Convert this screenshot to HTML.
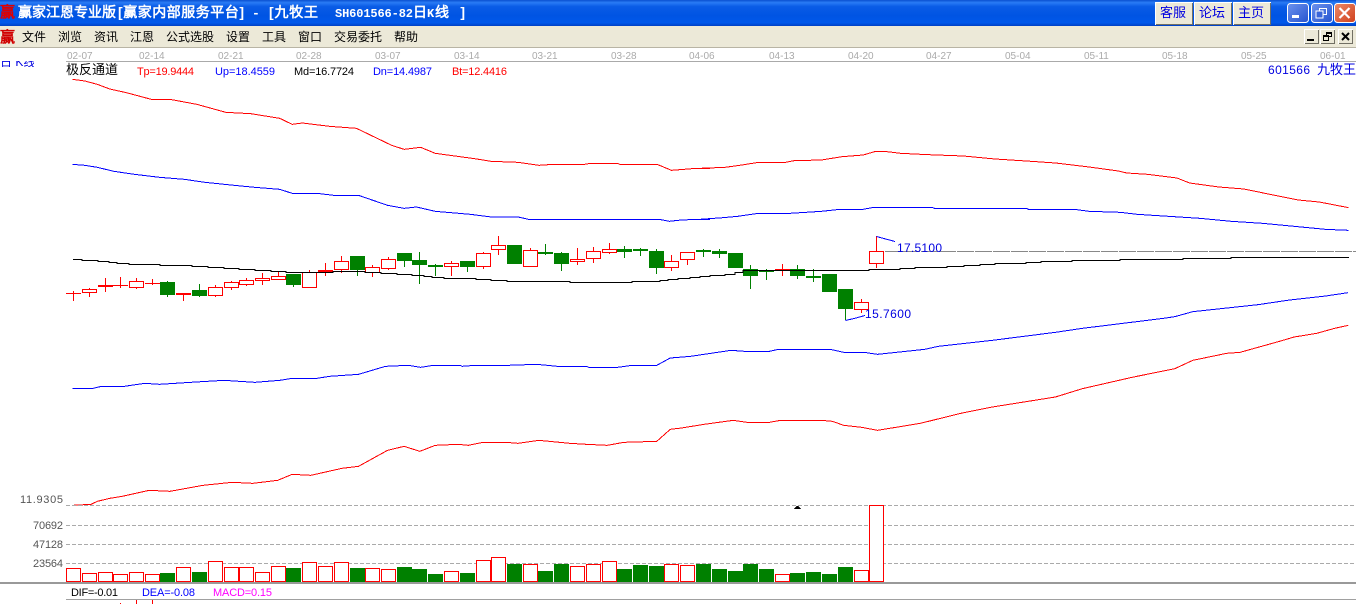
<!DOCTYPE html>
<html><head><meta charset="utf-8"><title>赢家江恩专业版</title>
<style>
html,body{margin:0;padding:0;background:#fff;width:1356px;height:604px;overflow:hidden}
svg{display:block;position:absolute;left:0;top:0}
text{font-family:"Liberation Sans","WenQuanYi Zen Hei",sans-serif;white-space:pre}
.m{font-size:12px;fill:#000}
.d{font-size:10px;fill:#aaa}
.i{font-size:11px}
.ax{font-size:11px;fill:#555}
.l{fill:none;stroke-width:1;vector-effect:non-scaling-stroke}
</style></head><body>
<svg width="1356" height="604" viewBox="0 0 1356 604" xmlns="http://www.w3.org/2000/svg">
<defs>
<linearGradient id="tb" x1="0" y1="0" x2="0" y2="1">
<stop offset="0" stop-color="#0a4fd0"/><stop offset=".1" stop-color="#2a7cf5"/><stop offset=".25" stop-color="#0a5ce6"/><stop offset=".6" stop-color="#0054e3"/><stop offset=".88" stop-color="#0058ea"/><stop offset="1" stop-color="#0040c4"/>
</linearGradient>
<linearGradient id="bb" x1="0" y1="0" x2="1" y2="1"><stop offset="0" stop-color="#6d93ee"/><stop offset="1" stop-color="#2553cf"/></linearGradient>
<linearGradient id="br" x1="0" y1="0" x2="1" y2="1"><stop offset="0" stop-color="#ec8a68"/><stop offset="1" stop-color="#d0401c"/></linearGradient>
<clipPath id="cl1"><rect x="0" y="61" width="34" height="6"/></clipPath>
<clipPath id="cl2"><rect x="0" y="600" width="70" height="4"/></clipPath>
</defs>

<!-- title bar -->
<rect x="0" y="0" width="1356" height="26" fill="url(#tb)"/>
<text x="0" y="17" style="font-size:15px;font-weight:bold;fill:#e00000">赢</text>
<text x="18" y="17" textLength="98" style="font-size:14px;font-weight:bold;fill:#fff">赢家江恩专业版</text>
<text x="118" y="17" textLength="126" style="font-size:14px;font-weight:bold;fill:#fff">[赢家内部服务平台]</text>
<text x="252" y="17" style="font-size:13px;font-weight:bold;fill:#fff;font-family:'Liberation Mono',monospace">-</text>
<text x="269" y="17" textLength="49" style="font-size:14px;font-weight:bold;fill:#fff">[九牧王</text>
<text x="335" y="17" textLength="78" style="font-size:12px;font-weight:bold;fill:#fff;font-family:'Liberation Mono',monospace">SH601566-82</text>
<text x="413" y="17" style="font-size:14px;font-weight:bold;fill:#fff">日</text>
<text x="427" y="17" style="font-size:12px;font-weight:bold;fill:#fff;font-family:'Liberation Mono',monospace">K</text>
<text x="435" y="17" textLength="30" style="font-size:14px;font-weight:bold;fill:#fff">线]</text>

<!-- title buttons -->
<g shape-rendering="crispEdges">
<rect x="1155" y="2" width="38" height="23" fill="#fff"/><rect x="1156" y="3" width="37" height="22" fill="#716f64"/><rect x="1156" y="3" width="36" height="21" fill="#ece9d8"/>
<rect x="1194" y="2" width="38" height="23" fill="#fff"/><rect x="1195" y="3" width="37" height="22" fill="#716f64"/><rect x="1195" y="3" width="36" height="21" fill="#ece9d8"/>
<rect x="1233" y="2" width="38" height="23" fill="#fff"/><rect x="1234" y="3" width="37" height="22" fill="#716f64"/><rect x="1234" y="3" width="36" height="21" fill="#ece9d8"/>
</g>
<text x="1160" y="17" style="font-size:13px;fill:#0000e0">客服</text>
<text x="1199" y="17" style="font-size:13px;fill:#0000e0">论坛</text>
<text x="1238" y="17" style="font-size:13px;fill:#0000e0">主页</text>
<rect x="1287.5" y="3.5" width="21" height="19" rx="3" fill="url(#bb)" stroke="#fff"/>
<rect x="1311.5" y="3.5" width="21" height="19" rx="3" fill="url(#bb)" stroke="#fff"/>
<rect x="1334.5" y="3.5" width="21" height="19" rx="3" fill="url(#br)" stroke="#fff"/>
<g shape-rendering="crispEdges">
<rect x="1292" y="15" width="7" height="3" fill="#fff"/>
<rect x="1319.5" y="8.5" width="7" height="6" fill="none" stroke="#fff"/>
<rect x="1316" y="11" width="7" height="7" fill="#3a66da" stroke="#fff"/>
</g>
<path d="M1339.5 8 L1349.5 18 M1349.5 8 L1339.5 18" stroke="#fff" stroke-width="2.2" fill="none"/>

<!-- menu bar -->
<rect x="0" y="26" width="1356" height="21" fill="#ece9d8"/>
<rect x="0" y="47" width="1356" height="1" fill="#b8b4a4"/>
<text x="0" y="42" style="font-size:15px;font-weight:bold;fill:#d00000">赢</text>
<text class="m" x="22" y="41">文件</text>
<text class="m" x="58" y="41">浏览</text>
<text class="m" x="94" y="41">资讯</text>
<text class="m" x="130" y="41">江恩</text>
<text class="m" x="166" y="41">公式选股</text>
<text class="m" x="226" y="41">设置</text>
<text class="m" x="262" y="41">工具</text>
<text class="m" x="298" y="41">窗口</text>
<text class="m" x="334" y="41">交易委托</text>
<text class="m" x="394" y="41">帮助</text>
<g shape-rendering="crispEdges">
<rect x="1304" y="29" width="15" height="15" fill="#fff"/><rect x="1305" y="30" width="14" height="14" fill="#716f64"/><rect x="1305" y="30" width="13" height="13" fill="#ece9d8"/>
<rect x="1320" y="29" width="15" height="15" fill="#fff"/><rect x="1321" y="30" width="14" height="14" fill="#716f64"/><rect x="1321" y="30" width="13" height="13" fill="#ece9d8"/>
<rect x="1338" y="29" width="15" height="15" fill="#fff"/><rect x="1339" y="30" width="14" height="14" fill="#716f64"/><rect x="1339" y="30" width="13" height="13" fill="#ece9d8"/>
<rect x="1307" y="39" width="7" height="2" fill="#000"/>
<rect x="1326.5" y="32.5" width="5" height="4" fill="none" stroke="#000"/><rect x="1323.5" y="35.5" width="5" height="5" fill="#ece9d8" stroke="#000"/><rect x="1326" y="32" width="6" height="2" fill="#000"/><rect x="1323" y="35" width="6" height="2" fill="#000"/>
</g>
<path d="M1342 33 L1349 40 M1349 33 L1342 40" stroke="#000" stroke-width="2" fill="none"/>

<!-- date axis -->
<g class="dates">
<text class="d" x="67" y="59">02-07</text><text class="d" x="139" y="59">02-14</text><text class="d" x="218" y="59">02-21</text><text class="d" x="296" y="59">02-28</text><text class="d" x="375" y="59">03-07</text><text class="d" x="454" y="59">03-14</text><text class="d" x="532" y="59">03-21</text><text class="d" x="611" y="59">03-28</text><text class="d" x="689" y="59">04-06</text><text class="d" x="769" y="59">04-13</text><text class="d" x="848" y="59">04-20</text><text class="d" x="926" y="59">04-27</text><text class="d" x="1005" y="59">05-04</text><text class="d" x="1084" y="59">05-11</text><text class="d" x="1162" y="59">05-18</text><text class="d" x="1241" y="59">05-25</text><text class="d" x="1320" y="59">06-01</text>
</g>
<rect x="66" y="61" width="1290" height="1" fill="#aaa" shape-rendering="crispEdges"/>
<g clip-path="url(#cl1)"><text x="0" y="66" style="font-size:12px;fill:#0000e0">日 K线</text></g>

<!-- indicator header -->
<text x="66" y="74" style="font-size:13px;fill:#000">极反通道</text>
<text class="i" x="137" y="75" textLength="57" style="fill:#f00">Tp=19.9444</text>
<text class="i" x="215" y="75" textLength="60" style="fill:#00f">Up=18.4559</text>
<text class="i" x="294" y="75" textLength="60" style="fill:#000">Md=16.7724</text>
<text class="i" x="373" y="75" textLength="59" style="fill:#00f">Dn=14.4987</text>
<text class="i" x="452" y="75" textLength="55" style="fill:#f00">Bt=12.4416</text>
<text x="1268" y="74" textLength="42" style="font-size:12px;fill:#0000e0">601566</text>
<text x="1317" y="74" style="font-size:13px;fill:#0000e0">九牧王</text>

<!-- channel lines -->
<g shape-rendering="crispEdges">
<g transform="translate(60,70) scale(.4146,.33333)">
<polyline class="l" stroke="#f00" points="30,28 60,33 90,43 120,57 160,68 220,88 265,88 330,103 400,127 460,131 530,145 560,163 585,159 650,169 715,175 800,226 830,238 870,232 905,250 1000,266 1040,274 1105,277 1155,286 1190,283 1265,283 1280,280 1345,280 1350,283 1440,283 1475,301 1505,298 1535,295 1568,295"/>
<polyline class="l" stroke="#00f" points="30,283 60,286 90,292 130,304 180,313 240,322 300,328 350,337 420,346 470,352 530,358 560,370 620,370 660,376 720,376 790,406 830,415 860,411 905,424 990,433 1040,441 1105,441 1130,448 1445,448 1470,454 1490,451 1530,448 1568,448"/>
</g>
<g transform="translate(700,140) scale(.41841,.33333)">
<polyline class="l" stroke="#f00" points="0,85 60,82 100,75 135,68 205,67 225,62 290,60 340,50 390,45 420,34 440,34 480,40 545,44 630,48 705,57 780,63 850,69 930,81 1000,93 1020,99 1070,103 1140,114 1170,129 1240,141 1300,147 1370,165 1430,180 1480,186 1550,203"/>
<polyline class="l" stroke="#00f" points="0,238 55,233 90,229 140,220 215,220 290,214 335,208 390,208 415,202 555,202 560,205 780,205 785,208 895,208 930,214 1005,217 1045,223 1120,229 1195,235 1270,244 1345,250 1420,259 1495,268 1550,271"/>
</g>
<g transform="translate(60,350) scale(.4146,.33333)">
<polyline class="l" stroke="#00f" points="30,115 80,115 100,109 155,109 205,100 240,103 315,97 395,91 470,97 530,91 560,85 620,85 650,79 720,73 785,49 840,46 870,52 900,46 965,46 970,49 1000,46 1080,46 1150,43 1200,49 1270,49 1275,52 1345,52 1380,46 1440,46"/>
<polyline class="l" stroke="#f00" points="30,466 75,463 90,454 120,445 150,439 215,421 265,424 345,406 415,397 465,400 525,391 560,373 605,376 680,355 720,349 790,301 830,289 868,304 905,286 960,283 985,286 1020,277 1075,277 1105,280 1155,271 1230,280 1270,283 1320,286 1360,277 1440,274"/>
</g>
<g transform="translate(650,280) scale(.45045,.33333)">
<polyline class="l" stroke="#00f" points="0,256 15,256 45,234 90,229 180,211 210,214 265,214 285,208 400,208 430,217 475,217 505,223 610,208 640,199 760,181 900,157 960,145 1140,115 1165,110 1205,95 1350,74 1420,60 1500,48 1550,38"/>
<polyline class="l" stroke="#f00" points="0,484 15,484 45,448 70,444 120,433 185,421 215,427 265,427 290,421 380,421 405,424 430,436 470,442 505,451 600,430 690,400 760,381 900,351 960,326 1070,292 1165,266 1205,241 1280,220 1310,217 1400,183 1430,171 1480,160 1520,145 1550,136"/>
</g>

<!-- dashed price line -->
<line x1="885" y1="251.5" x2="1356" y2="251.5" stroke="#888" stroke-dasharray="17 1"/>

<!-- wicks -->
<path fill="none" stroke="#f00" d="M73.5 291V301M89.5 288V297M105.5 278V292M120.5 277V288M136.5 278V289M152.5 279V285M183.5 293V301M215.5 285V297M231.5 281V290M246.5 278V286M262.5 273V285M278.5 272V279M309.5 270V272M325.5 263V276M341.5 256V273M372.5 265V277M388.5 257V270M451.5 261V276M483.5 252V269M498.5 236V255M530.5 248V266M577.5 248V265M593.5 247V263M609.5 243V254M671.5 255V271M687.5 252V265M782.5 264V276M861.5 299V313M876.5 236V268"/>
<path fill="none" stroke="#008000" d="M167.5 281V297M199.5 284V297M293.5 274V287M357.5 256V276M404.5 253V267M419.5 252V284M435.5 264V276M467.5 261V272M545.5 244V255M561.5 252V271M624.5 246V258M640.5 248V256M656.5 249V274M703.5 249V257M719.5 249V258M750.5 265V289M766.5 269V280M797.5 265V279M813.5 269V282M845.5 289V320"/>

<!-- filled red -->
<g fill="#f00">
<rect x="66" y="293" width="15" height="1"/><rect x="98" y="285" width="15" height="2"/><rect x="113" y="285" width="15" height="1"/><rect x="145" y="283" width="15" height="1"/><rect x="176" y="293" width="15" height="2"/><rect x="318" y="270" width="15" height="2"/><rect x="775" y="269" width="15" height="2"/>
</g>
<!-- hollow red -->
<g fill="#fff" stroke="#f00">
<rect x="82.5" y="289.5" width="14" height="3"/><rect x="129.5" y="281.5" width="14" height="6"/><rect x="208.5" y="287.5" width="14" height="8"/><rect x="224.5" y="282.5" width="14" height="5"/><rect x="239.5" y="280.5" width="14" height="4"/><rect x="255.5" y="278.5" width="14" height="2"/><rect x="271.5" y="276.5" width="14" height="3"/><rect x="302.5" y="272.5" width="14" height="15"/><rect x="334.5" y="261.5" width="14" height="8"/><rect x="365.5" y="267.5" width="14" height="5"/><rect x="381.5" y="259.5" width="14" height="9"/><rect x="444.5" y="263.5" width="14" height="3"/><rect x="476.5" y="253.5" width="14" height="13"/><rect x="491.5" y="245.5" width="14" height="4"/><rect x="523.5" y="250.5" width="14" height="16"/><rect x="570.5" y="259.5" width="14" height="2"/><rect x="586.5" y="251.5" width="14" height="7"/><rect x="602.5" y="249.5" width="14" height="3"/><rect x="664.5" y="261.5" width="14" height="6"/><rect x="680.5" y="252.5" width="14" height="7"/><rect x="854.5" y="302.5" width="14" height="7"/><rect x="869.5" y="251.5" width="14" height="12"/>
</g>
<!-- filled green -->
<g fill="#008000">
<rect x="160" y="282" width="15" height="13"/><rect x="192" y="290" width="15" height="6"/><rect x="286" y="274" width="15" height="11"/><rect x="350" y="256" width="15" height="14"/><rect x="397" y="253" width="15" height="8"/><rect x="412" y="260" width="15" height="5"/><rect x="428" y="265" width="15" height="2"/><rect x="460" y="261" width="15" height="6"/><rect x="507" y="245" width="15" height="19"/><rect x="538" y="252" width="15" height="2"/><rect x="554" y="253" width="15" height="11"/><rect x="617" y="249" width="15" height="3"/><rect x="633" y="249" width="15" height="2"/><rect x="649" y="251" width="15" height="17"/><rect x="696" y="250" width="15" height="2"/><rect x="712" y="251" width="15" height="3"/><rect x="728" y="253" width="15" height="15"/><rect x="743" y="269" width="15" height="7"/><rect x="759" y="270" width="15" height="2"/><rect x="790" y="269" width="15" height="7"/><rect x="806" y="276" width="15" height="2"/><rect x="822" y="274" width="15" height="18"/><rect x="838" y="289" width="15" height="20"/>
</g>

<!-- middle line drawn above candles -->
<polyline fill="none" stroke="#000" points="73,259.5 82,259.5 82,260.5 98,260.5 98,261.5 109,261.5 109,262.5 117,262.5 117,263.5 129,263.5 129,264.5 160,264.5 160,265.5 192,265.5 192,266.5 208,266.5 208,267.5 224,267.5 224,268.5 239,268.5 239,269.5 255,269.5 255,270.5 271,270.5 271,271.5 286,271.5 286,272.5 333,272.5 333,271.5 365,271.5 365,272.5 381,272.5 381,273.5 397,273.5 397,274.5 412,274.5 412,275.5 424,275.5 424,276.5 432,276.5 432,277.5 444,277.5 444,278.5 476,278.5 476,279.5 491,279.5 491,280.5 507,280.5 507,281.5 570,281.5 570,282.5 632,282.5 632,281.5 660,281.5 660,280.5 668,280.5 668,279.5 678,279.5 678,278.5 690,278.5 690,277.5 700,277.5 700,276.5 710,276.5 710,275.5 725,275.5 725,274.5 735,274.5 735,272.5 743,272.5 743,270.5 869,270.5 869,269.5 900,269.5 900,268.5 915,268.5 915,267.5 947,267.5 947,266.5 964,266.5 964,265.5 980,265.5 980,264.5 995,264.5 995,263.5 1026,263.5 1026,262.5 1041,262.5 1041,261.5 1072,261.5 1072,260.5 1120,260.5 1120,259.5 1183,259.5 1183,258.5 1231,258.5 1231,257.5 1349,257.5"/>

<!-- annotations -->
<polyline fill="none" stroke="#00f" points="876.5,236.5 882,238 895,241.5"/>
<polyline fill="none" stroke="#00f" points="845.5,320.5 856,318 865,315.5"/>
</g>
<text x="897" y="252" style="font-size:12px;fill:#0000e0" textLength="45">17.5100</text>
<text x="865" y="318" style="font-size:12px;fill:#0000e0" textLength="46">15.7600</text>

<!-- volume axis -->
<text class="ax" x="20" y="503" textLength="43">11.9305</text>
<text class="ax" x="33" y="529" textLength="30">70692</text>
<text class="ax" x="33" y="548" textLength="30">47128</text>
<text class="ax" x="33" y="567" textLength="30">23564</text>
<g stroke="#aaa" stroke-dasharray="4 2" shape-rendering="crispEdges">
<line x1="66" y1="505.5" x2="1356" y2="505.5"/>
<line x1="66" y1="525.5" x2="1356" y2="525.5"/>
<line x1="66" y1="544.5" x2="1356" y2="544.5"/>
<line x1="66" y1="563.5" x2="1356" y2="563.5"/>
</g>
<polygon points="794,509 801,509 798.5,506 796.5,506" fill="#000" shape-rendering="crispEdges"/>

<!-- volume bars -->
<g shape-rendering="crispEdges">
<g fill="#fff" stroke="#f00">
<rect x="66.5" y="568.5" width="14" height="13"/><rect x="82.5" y="573.5" width="14" height="8"/><rect x="98.5" y="572.5" width="14" height="9"/><rect x="113.5" y="574.5" width="14" height="7"/><rect x="129.5" y="572.5" width="14" height="9"/><rect x="145.5" y="574.5" width="14" height="7"/><rect x="176.5" y="567.5" width="14" height="14"/><rect x="208.5" y="561.5" width="14" height="20"/><rect x="224.5" y="567.5" width="14" height="14"/><rect x="239.5" y="567.5" width="14" height="14"/><rect x="255.5" y="572.5" width="14" height="9"/><rect x="271.5" y="566.5" width="14" height="15"/><rect x="302.5" y="562.5" width="14" height="19"/><rect x="318.5" y="566.5" width="14" height="15"/><rect x="334.5" y="562.5" width="14" height="19"/><rect x="365.5" y="568.5" width="14" height="13"/><rect x="381.5" y="569.5" width="14" height="12"/><rect x="444.5" y="571.5" width="14" height="10"/><rect x="476.5" y="560.5" width="14" height="21"/><rect x="491.5" y="557.5" width="14" height="24"/><rect x="523.5" y="564.5" width="14" height="17"/><rect x="570.5" y="566.5" width="14" height="15"/><rect x="586.5" y="564.5" width="14" height="17"/><rect x="602.5" y="561.5" width="14" height="20"/><rect x="664.5" y="564.5" width="14" height="17"/><rect x="680.5" y="565.5" width="14" height="16"/><rect x="775.5" y="574.5" width="14" height="7"/><rect x="854.5" y="570.5" width="14" height="11"/><rect x="869.5" y="505.5" width="14" height="76"/>
</g>
<g fill="#008000">
<rect x="160" y="573" width="15" height="9"/><rect x="192" y="572" width="15" height="10"/><rect x="286" y="568" width="15" height="14"/><rect x="350" y="568" width="15" height="14"/><rect x="397" y="567" width="15" height="15"/><rect x="412" y="569" width="15" height="13"/><rect x="428" y="574" width="15" height="8"/><rect x="460" y="573" width="15" height="9"/><rect x="507" y="564" width="15" height="18"/><rect x="538" y="571" width="15" height="11"/><rect x="554" y="564" width="15" height="18"/><rect x="617" y="569" width="15" height="13"/><rect x="633" y="565" width="15" height="17"/><rect x="649" y="566" width="15" height="16"/><rect x="696" y="564" width="15" height="18"/><rect x="712" y="569" width="15" height="13"/><rect x="728" y="571" width="15" height="11"/><rect x="743" y="564" width="15" height="18"/><rect x="759" y="569" width="15" height="13"/><rect x="790" y="573" width="15" height="9"/><rect x="806" y="572" width="15" height="10"/><rect x="822" y="574" width="15" height="8"/><rect x="838" y="567" width="15" height="15"/>
</g>
<rect x="0" y="582" width="1356" height="2" fill="#999"/>
<rect x="66" y="599" width="1290" height="1" fill="#a0a0a0"/>
<path d="M136.5 600V604M152.5 600V604M120.5 603V604" stroke="#f00" fill="none"/>
</g>

<!-- macd -->
<text class="i" x="71" y="596" textLength="47" style="fill:#000">DIF=-0.01</text>
<text class="i" x="142" y="596" textLength="53" style="fill:#00f">DEA=-0.08</text>
<text class="i" x="213" y="596" textLength="59" style="fill:#f0f">MACD=0.15</text>
<g clip-path="url(#cl2)"><text class="ax" x="40" y="612">0.10</text></g>
</svg>
</body></html>
